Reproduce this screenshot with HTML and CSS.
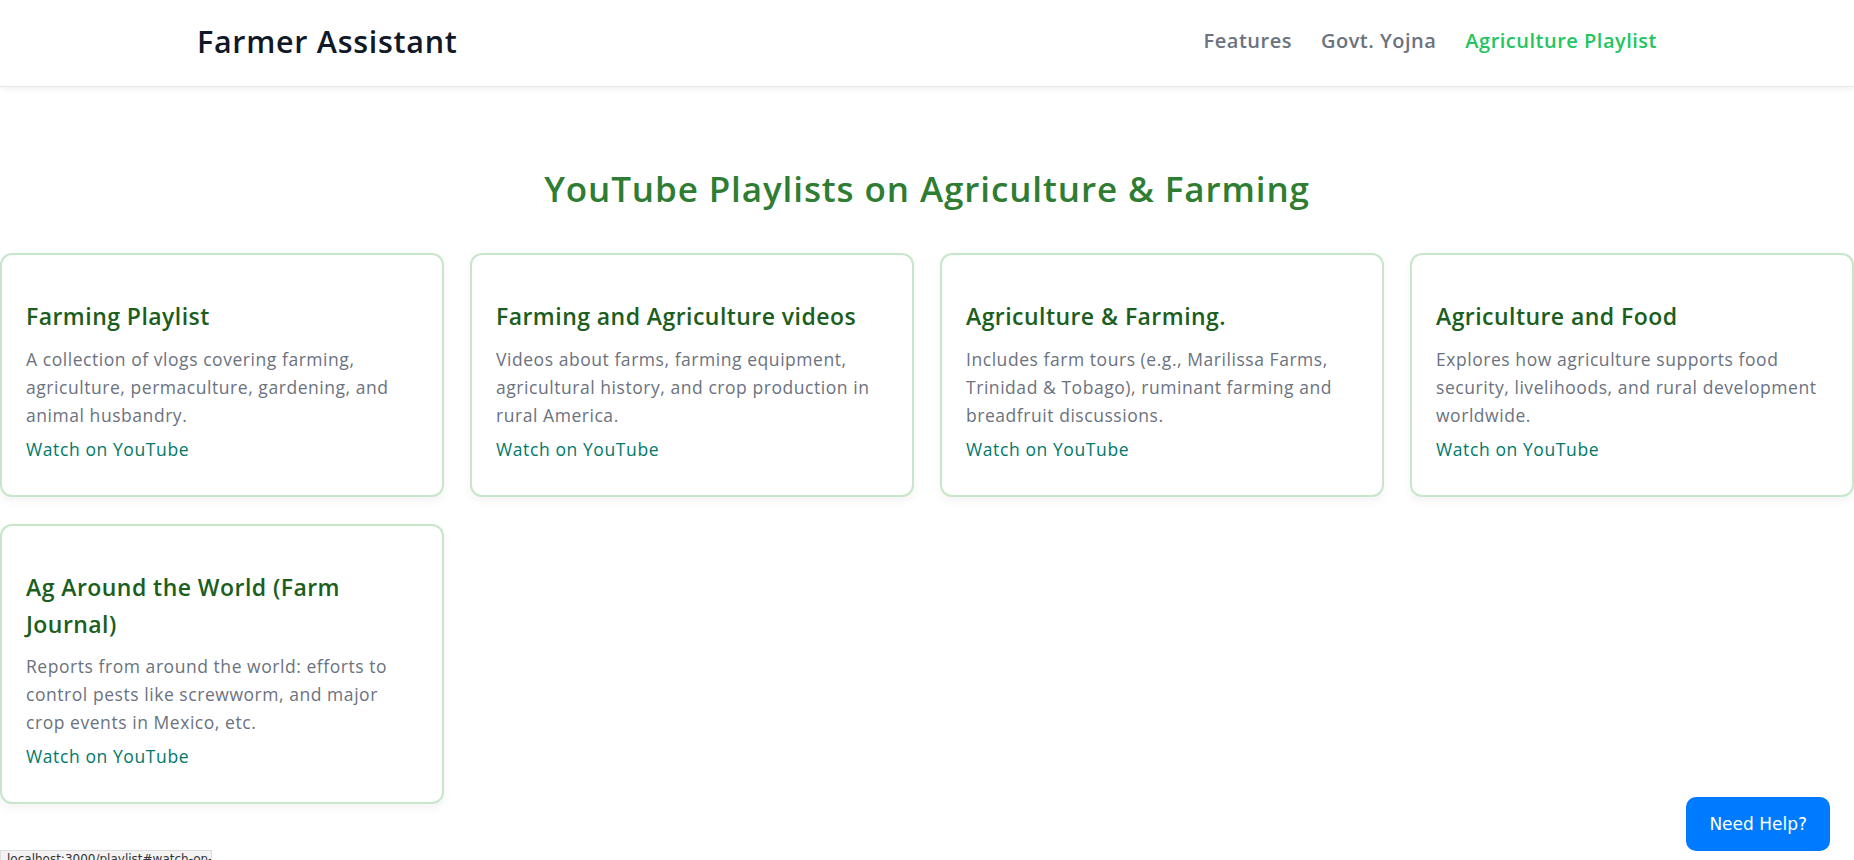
FILE: index.html
```html
<!DOCTYPE html>
<html lang="en">
<head>
<meta charset="utf-8">
<title>Farmer Assistant</title>
<link rel="stylesheet" href="styles.css">
</head>
<body>
<header class="navbar">
  <div class="nav-inner">
    <div class="logo">Farmer Assistant</div>
    <nav class="nav-links">
      <a href="#" class="nav-link">Features</a>
      <a href="#" class="nav-link">Govt. Yojna</a>
      <a href="#" class="nav-link active">Agriculture Playlist</a>
    </nav>
  </div>
</header>

<main class="playlists">
  <h2 class="section-title">YouTube Playlists on Agriculture &amp; Farming</h2>
  <div class="grid">
    <div class="card">
      <h3 class="card-title">Farming Playlist</h3>
      <p class="card-text">A collection of vlogs covering farming, agriculture, permaculture, gardening, and animal husbandry.</p>
      <a href="#" class="card-link">Watch on YouTube</a>
    </div>
    <div class="card">
      <h3 class="card-title">Farming and Agriculture videos</h3>
      <p class="card-text">Videos about farms, farming equipment, agricultural history, and crop production in rural America.</p>
      <a href="#" class="card-link">Watch on YouTube</a>
    </div>
    <div class="card">
      <h3 class="card-title">Agriculture &amp; Farming.</h3>
      <p class="card-text">Includes farm tours (e.g., Marilissa Farms, Trinidad &amp; Tobago), ruminant farming and breadfruit discussions.</p>
      <a href="#" class="card-link">Watch on YouTube</a>
    </div>
    <div class="card">
      <h3 class="card-title">Agriculture and Food</h3>
      <p class="card-text">Explores how agriculture supports food security, livelihoods, and rural development worldwide.</p>
      <a href="#" class="card-link">Watch on YouTube</a>
    </div>
    <div class="card">
      <h3 class="card-title">Ag Around the World (Farm Journal)</h3>
      <p class="card-text">Reports from around the world: efforts to control pests like screwworm, and major crop events in Mexico, etc.</p>
      <a href="#" class="card-link">Watch on YouTube</a>
    </div>
  </div>
</main>

<button class="help-btn">Need Help?</button>
<div class="status-bar">localhost:3000/playlist#watch-on-youtube</div>
</body>
</html>
```

FILE: styles.css
```css
* { box-sizing: border-box; }

html, body {
  margin: 0;
  padding: 0;
  background: #ffffff;
}

body {
  font-family: "Open Sans", "Noto Sans", Arial, sans-serif;
  line-height: 1.6;
  color: #333;
}

.navbar {
  background: #ffffff;
  border-bottom: 1px solid #e5e7eb;
  box-shadow: 0 2px 6px rgba(0, 0, 0, 0.06);
}

.nav-inner {
  max-width: 1460px;
  margin: 0 auto;
  height: 86px;
  padding-bottom: 4px;
  display: flex;
  align-items: center;
  justify-content: space-between;
}

.logo {
  font-size: 30.5px;
  font-weight: 600;
  letter-spacing: 0.7px;
  color: #111827;
}

.nav-links {
  display: flex;
  gap: 29px;
}

.nav-link {
  font-size: 20px;
  font-weight: 600;
  letter-spacing: 0.5px;
  color: #6b7280;
  text-decoration: none;
}

.nav-link.active {
  color: #22c55e;
}

.playlists {
  padding-top: 74px;
}

.section-title {
  margin: 0 0 36px;
  text-align: center;
  font-size: 35px;
  font-weight: 600;
  letter-spacing: 0.9px;
  color: #2e7d32;
  line-height: 56px;
}

.grid {
  display: grid;
  grid-template-columns: repeat(4, 1fr);
  column-gap: 26px;
  row-gap: 27px;
  padding-bottom: 40px;
}

.card {
  border: 2px solid #c8e6c9;
  border-radius: 12px;
  padding: 24px;
  background: #fff;
  box-shadow: 0 4px 10px rgba(0, 0, 0, 0.05);
}

.card-title {
  margin: 19px 0 10px;
  font-size: 23px;
  font-weight: 600;
  letter-spacing: 0.45px;
  color: #1b5e20;
  line-height: 36.8px;
}

.card-text {
  margin: 0 0 6px;
  font-size: 17.5px;
  letter-spacing: 0.55px;
  color: #6b7280;
  line-height: 28px;
}

.card-link {
  display: block;
  margin-bottom: 8px;
  font-size: 17.5px;
  letter-spacing: 0.6px;
  color: #00796b;
  text-decoration: none;
  line-height: 28px;
}

.help-btn {
  position: fixed;
  right: 24px;
  bottom: 9px;
  padding: 16px 23px;
  border: none;
  border-radius: 10px;
  background: #007bff;
  color: #ffffff;
  font-family: "DejaVu Sans", Verdana, sans-serif;
  font-size: 17px;
  line-height: 22px;
}

.status-bar {
  position: fixed;
  left: 0;
  bottom: -6px;
  width: 212px;
  height: 16px;
  padding: 1px 6px;
  background: #f3f3f3;
  border: 1px solid #dcdcdc;
  font-family: "DejaVu Sans", sans-serif;
  font-size: 12px;
  line-height: 14px;
  color: #333;
  white-space: nowrap;
  overflow: hidden;
}
```
